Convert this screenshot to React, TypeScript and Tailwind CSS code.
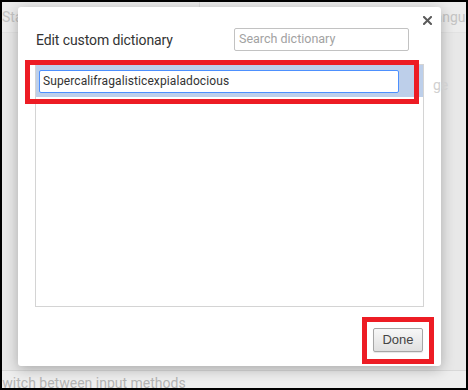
import React from 'react';

const font = { fontFamily: 'Roboto, "Noto Sans", sans-serif' };

function CloseIcon() {
  return (
    <svg width="9" height="9" viewBox="0 0 9 9" className="block">
      <path d="M1 1L8 8M8 1L1 8" stroke="#5a5a5a" strokeWidth="2" strokeLinecap="square" />
    </svg>
  );
}

export default function App() {
  return (
    <div
      className="relative w-[468px] h-[390px] border-2 border-black bg-[#e8e8e8] overflow-hidden"
      style={font}
    >
      {/* settings page behind the overlay */}
      <div className="flex flex-col h-full text-[14px] text-[#c4c4c4]">
        <div className="grid grid-cols-[198px_1fr] h-[31px] border-b border-[#e2e2e2] bg-[#ececec]">
          <div className="flex items-center border-r border-[#dedede] pt-[1px]">Status</div>
          <div className="flex items-center pl-[227px] pt-[1px] whitespace-nowrap">Languages</div>
        </div>
        <div className="flex-1" />
        <div className="h-[18px] border-t border-[#d8d8d8] bg-[#eeeeee] flex items-end">
          <span className="-ml-[8px] -mb-[6px] text-[14px] text-[#b4b4b4] whitespace-nowrap">
            Switch between input methods
          </span>
        </div>
      </div>

      {/* dialog */}
      <div className="absolute left-[16px] top-[5px] w-[423px] h-[359px] bg-white rounded-[3px] shadow-[0_3px_14px_rgba(0,0,0,0.28)] flex flex-col">
        <button className="absolute left-[405px] top-[9px] p-0">
          <CloseIcon />
        </button>
        <div className="flex items-center justify-between mt-[21px] h-[23px] pl-[18px] pr-[32px]">
          <div className="text-[14px] tracking-[-0.1px] text-[#333333] leading-none">Edit custom dictionary</div>
          <div className="w-[175px] h-[23px] border border-[#c2c2c2] rounded-[2px] flex items-center px-[4px] text-[12.5px] text-[#a2a2a2]">
            Search dictionary
          </div>
        </div>
        <div className="mx-[17px] mt-[13px] h-[243px] border border-[#d4d4d4]">
          <div className="h-[32px] bg-[#bdcfea] flex items-center pl-[3px]">
            <div className="w-[360px] h-[23px] bg-white border border-[#4d90fe] rounded-[2px] flex items-center px-[3px] text-[12px] tracking-[0.1px] text-[#333333]">
              Supercalifragalisticexpialadocious
            </div>
          </div>
        </div>
        <div className="flex justify-end pr-[18px] mt-[21px]">
          <button
            className="w-[50px] h-[24px] rounded-[2px] border border-[#a6a6a6] bg-[linear-gradient(#f7f7f7,#e0e0e0)] text-[13px] text-[#444444] shadow-[0_1px_1px_rgba(0,0,0,0.1)]"
            style={{ fontFamily: '"Liberation Sans", Arial, sans-serif' }}
          >
            Done
          </button>
        </div>
      </div>

      {/* faint text bleeding over dialog edge */}
      <div className="absolute left-[431px] top-[73px] text-[14px] text-[#d0d0d0] pointer-events-none">ge</div>

      {/* red annotation boxes */}
      <div className="absolute left-[23px] top-[58px] w-[394px] h-[44px] border-[5px] border-[#ed1c24]" />
      <div className="absolute left-[360px] top-[315px] w-[72px] h-[47px] border-[5px] border-[#ed1c24]" />
    </div>
  );
}
